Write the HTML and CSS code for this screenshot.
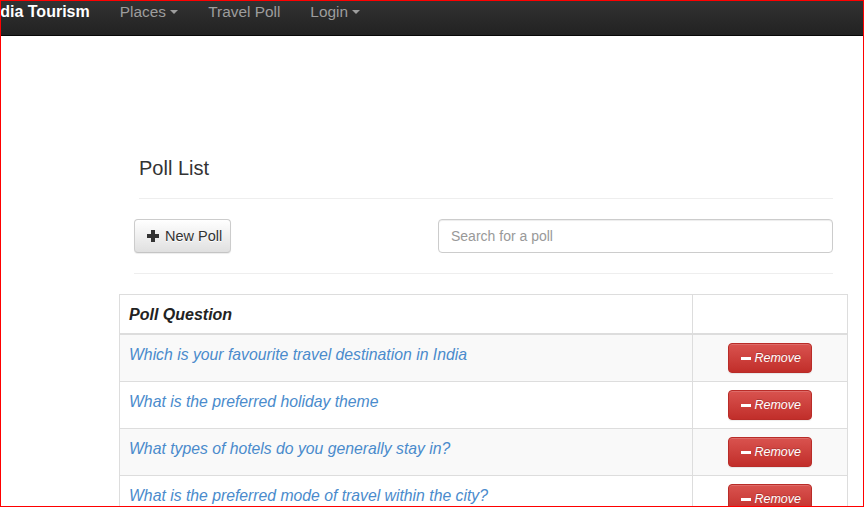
FILE: index.html
```html
<!DOCTYPE html>
<html lang="en">
<head>
<meta charset="utf-8">
<title>India Tourism - Poll List</title>
<link rel="stylesheet" href="styles.css">
</head>
<body>
<div class="frame">
  <nav class="navbar">
    <a class="brand" href="#">India Tourism</a>
    <ul class="nav">
      <li><a href="#">Places <b class="caret"></b></a></li>
      <li><a href="#">Travel Poll</a></li>
      <li><a href="#">Login <b class="caret"></b></a></li>
    </ul>
  </nav>
  <main class="main">
    <div class="head-area">
      <h4 class="page-title">Poll List</h4>
      <hr class="rule rule-title">
      <div class="toolbar">
        <button class="btn btn-default" type="button">
          <svg class="icon-plus" width="12" height="12" viewBox="0 0 12 12"><path d="M4 0h4v4h4v4h-4v4h-4v-4h-4v-4h4z" fill="#333"/></svg>
          <span>New Poll</span>
        </button>
        <input class="search" type="text" placeholder="Search for a poll">
      </div>
      <hr class="rule rule-tool">
    </div>
    <table class="polls">
      <colgroup><col><col class="col-action"></colgroup>
      <thead>
        <tr><th>Poll Question</th><th></th></tr>
      </thead>
      <tbody>
        <tr><td><a href="#">Which is your favourite travel destination in India</a></td><td class="act"><button class="btn btn-danger" type="button"><span class="icon-minus"></span> Remove</button></td></tr>
        <tr><td><a href="#">What is the preferred holiday theme</a></td><td class="act"><button class="btn btn-danger" type="button"><span class="icon-minus"></span> Remove</button></td></tr>
        <tr><td><a href="#">What types of hotels do you generally stay in?</a></td><td class="act"><button class="btn btn-danger" type="button"><span class="icon-minus"></span> Remove</button></td></tr>
        <tr><td><a href="#">What is the preferred mode of travel within the city?</a></td><td class="act"><button class="btn btn-danger" type="button"><span class="icon-minus"></span> Remove</button></td></tr>
      </tbody>
    </table>
  </main>
</div>
</body>
</html>
```

FILE: styles.css
```css
* { box-sizing: border-box; }
html, body { margin: 0; padding: 0; background: #fff; }
body { font-family: "Liberation Sans", Arial, sans-serif; color: #333; }

.frame {
  width: 864px;
  height: 507px;
  border: 1px solid #ff0000;
  overflow: hidden;
}

.navbar {
  display: flex;
  align-items: flex-start;
  height: 35px;
  padding-top: 1px;
  background: linear-gradient(to bottom, #323232 0%, #222 100%);
  border-bottom: 1px solid #080808;
  white-space: nowrap;
}
.brand {
  margin-left: -15px;
  padding-right: 15px;
  font-size: 16px;
  font-weight: bold;
  line-height: 20px;
  color: #fff;
  text-decoration: none;
}
.nav { display: flex; list-style: none; margin: 0; padding: 0; }
.nav a {
  display: block;
  padding: 0 15px;
  font-size: 15.4px;
  line-height: 20px;
  color: #9d9d9d;
  text-decoration: none;
}
.caret {
  display: inline-block;
  width: 0;
  height: 0;
  vertical-align: middle;
  border-top: 4px solid #9d9d9d;
  border-left: 4px solid transparent;
  border-right: 4px solid transparent;
  margin-top: -2px;
}

.main { width: 729px; margin-left: 118px; }
.head-area { padding: 0 15px; }
.page-title {
  margin: 121px 0 0 5px;
  font-size: 20px;
  line-height: 22px;
  font-weight: normal;
  color: #333;
}
.rule { border: 0; border-top: 1px solid #eee; height: 0; margin: 0; }
.rule-title { margin: 19px 0 0 5px; }
.rule-tool { margin-top: 20px; }

.toolbar {
  display: flex;
  justify-content: space-between;
  align-items: center;
  margin-top: 20px;
  height: 34px;
}
.btn {
  display: inline-flex;
  align-items: center;
  font-family: "Liberation Sans", Arial, sans-serif;
  border-radius: 4px;
  cursor: pointer;
  white-space: nowrap;
}
.btn-default {
  height: 34px;
  padding: 0 8px 0 12px;
  font-size: 14.5px;
  color: #333;
  background: linear-gradient(to bottom, #fff 0%, #e0e0e0 100%);
  border: 1px solid #ccc;
  border-bottom-color: #c4c4c4;
  text-shadow: 0 1px 0 #fff;
  box-shadow: inset 0 1px 0 rgba(255,255,255,.15), 0 1px 1px rgba(0,0,0,.075);
  gap: 6px;
}
.icon-plus { display: block; flex: none; }

.search {
  width: 395px;
  height: 34px;
  padding: 0 12px;
  font-family: "Liberation Sans", Arial, sans-serif;
  font-size: 14px;
  color: #555;
  border: 1px solid #ccc;
  border-radius: 4px;
  box-shadow: inset 0 1px 1px rgba(0,0,0,.075);
  outline: none;
}
.search::placeholder { color: #999; }

.polls {
  margin-top: 20px;
  width: 729px;
  border-collapse: collapse;
  table-layout: fixed;
  border: 1px solid #ddd;
  font-size: 16px;
  line-height: 22px;
}
.col-action { width: 155px; }
.polls th, .polls td {
  padding: 9px 9px 7px;
  border: 1px solid #ddd;
  vertical-align: top;
  text-align: left;
}
.polls th {
  font-weight: bold;
  font-style: italic;
  color: #222;
  border-bottom: 2px solid #ddd;
}
.polls tbody tr:nth-child(odd) { background: #f9f9f9; }
.polls td a { color: #4a8bcc; font-size: 15.75px; font-style: italic; text-decoration: none; }
.polls td.act { text-align: center; vertical-align: middle; padding: 8px 9px; }

.btn-danger {
  height: 30px;
  padding: 0 10px 0 12px;
  font-size: 12.5px;
  font-style: italic;
  color: #fff;
  background: linear-gradient(to bottom, #d9534f 0%, #c12e2a 100%);
  border: 1px solid #b92c28;
  text-shadow: 0 -1px 0 rgba(0,0,0,.2);
  box-shadow: inset 0 1px 0 rgba(255,255,255,.15), 0 1px 1px rgba(0,0,0,.075);
  white-space: pre;
}
.icon-minus {
  display: inline-block;
  width: 10px;
  height: 3px;
  background: #fff;
}
```
